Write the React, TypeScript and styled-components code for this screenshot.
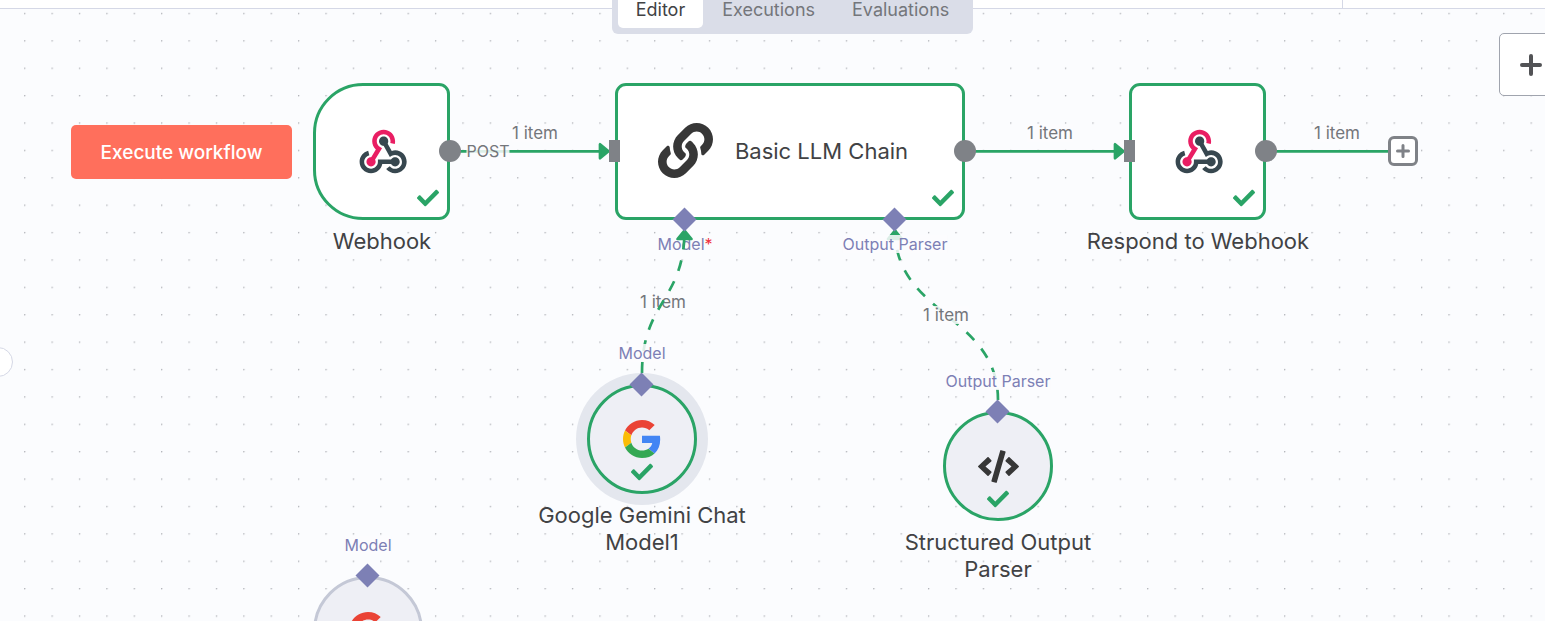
import React from "react";
import styled, { createGlobalStyle, css } from "styled-components";
import { FaCheck, FaCode, FaLink } from "react-icons/fa";

const color = {
  canvas: "#fbfcfe",
  success: "#2aa466",
  text: "#414244",
  icon: "#373737",
  muted: "#74767b",
  handle: "#7f8287",
  violet: "#7d80b5",
  subNode: "#eeeff5",
  line: "#d5d8e6",
};

const GlobalStyle = createGlobalStyle`
  * { box-sizing: border-box; }
  body {
    margin: 0;
    background: ${color.canvas};
    color: ${color.text};
    font-family: Inter, "Liberation Sans", sans-serif;
  }
  button { font-family: inherit; padding: 0; cursor: pointer; }
`;

const Page = styled.div`
  display: flex;
  flex-direction: column;
  min-height: 100vh;
`;

const Header = styled.header`
  position: relative;
  z-index: 2;
  display: flex;
  justify-content: center;
  align-items: flex-end;
  height: 9px;
  padding-left: 40px;
  background: #fff;
  border-bottom: 1px solid ${color.line};
`;

const HeaderDivider = styled.span`
  position: absolute;
  top: 0;
  right: 202px;
  width: 1px;
  height: 8px;
  background: ${color.line};
`;

const Tabs = styled.nav`
  display: flex;
  flex: none;
  gap: 1px;
  height: 48px;
  margin-bottom: -26px;
  padding: 6px;
  border-radius: 6px;
  background: #dadde8;
`;

const Tab = styled.button<{ $active?: boolean }>`
  padding: 0 18px 2px;
  border: 0;
  border-radius: 5px;
  background: ${(p) => (p.$active ? "#fff" : "transparent")};
  color: ${(p) => (p.$active ? color.text : color.muted)};
  font-size: 18px;
  font-weight: 400;
`;

const Canvas = styled.main`
  position: relative;
  flex: 1;
  overflow: hidden;
`;

const Layer = styled.svg`
  position: absolute;
  inset: 0;
  width: 100%;
  height: 100%;
  pointer-events: none;
`;

type At = { $x: number; $y: number };

const at = css<At>`
  position: absolute;
  left: ${(p) => p.$x}px;
  top: ${(p) => p.$y}px;
`;

const ExecuteButton = styled.button<At>`
  ${at}
  width: 221px;
  height: 54px;
  border: 0;
  border-radius: 5px;
  background: #ff6f5c;
  color: #fff;
  font-size: 19px;
  font-weight: 500;
`;

const NodeBox = styled.div<At & { $trigger?: boolean }>`
  ${at}
  display: flex;
  align-items: center;
  justify-content: center;
  width: 137px;
  height: 137px;
  padding-left: 2px;
  border: 3px solid ${color.success};
  border-radius: ${(p) => (p.$trigger ? "50px 11px 11px 50px" : "11px")};
  background: #fff;
  color: ${color.icon};
`;

const WideNodeBox = styled(NodeBox)`
  gap: 22px;
  width: 350px;
  padding: 0 14px 2px 0;
`;

const NodeName = styled.span`
  color: ${color.text};
  font-size: 22px;
  font-weight: 400;
`;

const SubNodeBox = styled.div<At & { $idle?: boolean; $selected?: boolean }>`
  ${at}
  display: flex;
  align-items: center;
  justify-content: center;
  width: 110px;
  height: 110px;
  border: 3px solid ${(p) => (p.$idle ? "#c4c8d6" : color.success)};
  border-radius: 50%;
  background: ${color.subNode};
  color: ${color.icon};
  box-shadow: ${(p) => (p.$selected ? "0 0 0 11px #e4e7ee" : "none")};
`;

const Status = styled.span<{ $round?: boolean }>`
  position: absolute;
  right: ${(p) => (p.$round ? "41px" : "8px")};
  bottom: 8px;
  display: flex;
  color: ${color.success};
`;

const Title = styled.div<At>`
  ${at}
  width: 240px;
  margin-left: -120px;
  font-size: 22px;
  font-weight: 400;
  line-height: 27px;
  text-align: center;
`;

const Label = styled.span<At & { $plain?: boolean }>`
  ${at}
  transform: translate(-50%, -50%);
  color: ${color.muted};
  background: ${(p) => (p.$plain ? "transparent" : "rgba(251, 252, 254, 0.85)")};
  font-size: 16px;
  line-height: 18px;
  white-space: nowrap;
`;

const PortLabel = styled(Label)`
  color: ${color.violet};
`;

const ItemLabel = styled(Label)`
  font-size: 17px;
`;

const Required = styled.span`
  color: #f0303c;
`;

const Output = styled.span<At>`
  ${at}
  width: 22px;
  height: 22px;
  margin: -11px 0 0 -11px;
  border-radius: 50%;
  background: ${color.handle};
`;

const Input = styled.span<At>`
  ${at}
  width: 11px;
  height: 22px;
  margin: -11px 0 0 -6px;
  background: ${color.handle};
`;

const Diamond = styled.span<At>`
  ${at}
  width: 17px;
  height: 17px;
  margin: -8px 0 0 -8px;
  background: ${color.violet};
  transform: rotate(45deg);
`;

const AddNext = styled.button<At>`
  ${at}
  display: flex;
  align-items: center;
  justify-content: center;
  width: 30px;
  height: 30px;
  border: 3px solid ${color.handle};
  border-radius: 6px;
  background: #fff;
  color: ${color.handle};
`;

const AddNode = styled.button`
  position: absolute;
  top: 24px;
  right: -18px;
  display: flex;
  align-items: center;
  justify-content: center;
  width: 64px;
  height: 63px;
  border: 1px solid #a0a4ae;
  border-radius: 5px;
  background: #fff;
  color: #525356;
`;

const SidebarToggle = styled.button`
  position: absolute;
  top: 338px;
  left: -17px;
  display: flex;
  align-items: center;
  justify-content: center;
  width: 30px;
  height: 30px;
  border: 1px solid ${color.line};
  border-radius: 50%;
  background: #fff;
  color: #a0a4ae;
`;

const WebhookIcon = () => (
  <svg width="55" height="55" viewBox="0 0 48 48" aria-hidden="true">
    <g fill="#37474f">
      <path d="M35 37c-2.2 0-4-1.8-4-4s1.8-4 4-4 4 1.8 4 4-1.8 4-4 4" />
      <path d="M35 43c-3 0-5.9-1.4-7.8-3.7l3.1-2.5c1.1 1.4 2.9 2.3 4.7 2.3 3.3 0 6-2.7 6-6s-2.7-6-6-6c-1 0-2 .3-2.9.7l-1.7 1L23.3 16l3.5-1.9 5.3 9.4c1-.3 2-.5 3-.5 5.5 0 10 4.5 10 10S40.5 43 35 43" />
      <path d="M14 43C8.5 43 4 38.5 4 33c0-4.6 3.1-8.5 7.5-9.7l1 3.9C9.9 27.9 8 30.3 8 33c0 3.3 2.7 6 6 6s6-2.7 6-6v-2h15v4H23.8c-.9 4.6-5 8-9.8 8" />
      <path d="M25 19c-2.2 0-4-1.8-4-4s1.8-4 4-4 4 1.8 4 4-1.8 4-4 4" />
    </g>
    <g fill="#e91e63">
      <path d="M14 37c-2.2 0-4-1.8-4-4s1.8-4 4-4 4 1.8 4 4-1.8 4-4 4" />
      <path d="m15.7 34-3.4-2 5.9-9.7c-2-1.9-3.2-4.5-3.2-7.3 0-5.5 4.5-10 10-10s10 4.5 10 10c0 .9-.1 1.7-.3 2.5l-3.9-1c.1-.5.2-1 .2-1.5 0-3.3-2.7-6-6-6s-6 2.7-6 6c0 2.1 1.1 4 2.9 5.1l1.7 1z" />
    </g>
  </svg>
);

const GoogleIcon = () => (
  <svg width="38" height="38" viewBox="0 0 48 48" aria-hidden="true">
    <path fill="#ea4335" d="M24 9.5c3.54 0 6.71 1.22 9.21 3.6l6.85-6.85C35.9 2.38 30.47 0 24 0 14.62 0 6.51 5.38 2.56 13.22l7.98 6.19C12.43 13.72 17.74 9.5 24 9.5z" />
    <path fill="#4285f4" d="M46.98 24.55c0-1.57-.15-3.09-.38-4.55H24v9.02h12.94c-.58 2.96-2.26 5.48-4.78 7.18l7.73 6c4.51-4.18 7.09-10.36 7.09-17.65z" />
    <path fill="#fbbc05" d="M10.53 28.59c-.48-1.45-.76-2.99-.76-4.59s.27-3.14.76-4.59l-7.98-6.19C.92 16.46 0 20.12 0 24c0 3.88.92 7.54 2.56 10.78l7.97-6.19z" />
    <path fill="#34a853" d="M24 48c6.48 0 11.93-2.13 15.89-5.81l-7.73-6c-2.15 1.45-4.92 2.3-8.16 2.3-6.26 0-11.57-4.22-13.47-9.91l-7.98 6.19C6.51 42.62 14.62 48 24 48z" />
  </svg>
);

const PlusIcon = ({ size, weight }: { size: number; weight: number }) => (
  <svg width={size} height={size} viewBox={`0 0 ${size} ${size}`} aria-hidden="true">
    <path
      d={`M${weight / 2} ${size / 2}H${size - weight / 2}M${size / 2} ${weight / 2}V${size - weight / 2}`}
      stroke="currentColor"
      strokeWidth={weight}
      strokeLinecap="round"
    />
  </svg>
);

const Done = ({ round }: { round?: boolean }) => (
  <Status $round={round}>
    <FaCheck size={22} />
  </Status>
);

const Arrow = ({ x, y, up }: { x: number; y: number; up?: boolean }) => (
  <path
    d="M-1.5 0L-10 -7V7Z"
    transform={`translate(${x} ${y})${up ? " rotate(-90)" : ""}`}
    fill={color.success}
    stroke={color.success}
    strokeWidth="2.7"
    strokeLinejoin="round"
  />
);

const edge = { fill: "none", stroke: color.success, strokeWidth: 2.7 };

export default function App() {
  return (
    <Page>
      <GlobalStyle />
      <Header>
        <Tabs>
          <Tab $active>Editor</Tab>
          <Tab>Executions</Tab>
          <Tab>Evaluations</Tab>
        </Tabs>
        <HeaderDivider />
      </Header>

      <Canvas>
        <Layer aria-hidden="true">
          <defs>
            <pattern id="dots" x="24.1" y="3.8" width="27.39" height="27.39" patternUnits="userSpaceOnUse">
              <circle cx="0.7" cy="0.7" r="0.7" fill="#a0a2a9" />
            </pattern>
          </defs>
          <rect width="100%" height="100%" fill="url(#dots)" />
          <path {...edge} d="M450 142.3H604M965 142.3H1120M1266 142.3H1388" />
          <path {...edge} strokeDasharray="11 11" d="M998 391C998 306 895 306 895 221" />
          <Arrow x={610} y={142.3} />
          <Arrow x={1125} y={142.3} />
          <Arrow x={895} y={220} up />
        </Layer>

        <ItemLabel $x={535} $y={124}>1 item</ItemLabel>
        <ItemLabel $x={1050} $y={124}>1 item</ItemLabel>
        <ItemLabel $x={1337} $y={124}>1 item</ItemLabel>
        <ItemLabel $x={946} $y={306}>1 item</ItemLabel>
        <ItemLabel $x={663} $y={293} $plain>1 item</ItemLabel>
        <Label $x={488} $y={142}>POST</Label>
        <PortLabel $x={685} $y={235} $plain>
          Model<Required>*</Required>
        </PortLabel>
        <PortLabel $x={895} $y={235}>Output Parser</PortLabel>

        <Layer aria-hidden="true">
          <path {...edge} strokeDasharray="11 11" d="M642 364C642 292 684.5 292 684.5 221" />
          <Arrow x={684.5} y={220} up />
        </Layer>

        <PortLabel $x={642} $y={344}>Model</PortLabel>
        <PortLabel $x={998} $y={372}>Output Parser</PortLabel>
        <PortLabel $x={368} $y={536}>Model</PortLabel>

        <ExecuteButton $x={71} $y={116}>Execute workflow</ExecuteButton>

        <NodeBox $x={313} $y={74} $trigger>
          <WebhookIcon />
          <Done />
        </NodeBox>
        <Title $x={382} $y={219}>Webhook</Title>
        <Output $x={450} $y={142} />

        <WideNodeBox $x={615} $y={74}>
          <FaLink size={55} />
          <NodeName>Basic LLM Chain</NodeName>
          <Done />
        </WideNodeBox>
        <Input $x={615} $y={142} />
        <Output $x={965} $y={142} />
        <Diamond $x={684} $y={210} />
        <Diamond $x={894} $y={210} />

        <NodeBox $x={1129} $y={74}>
          <WebhookIcon />
          <Done />
        </NodeBox>
        <Title $x={1198} $y={219}>Respond to Webhook</Title>
        <Input $x={1130} $y={142} />
        <Output $x={1266} $y={142} />
        <AddNext $x={1388} $y={127} aria-label="Add next node">
          <PlusIcon size={14} weight={3} />
        </AddNext>

        <SubNodeBox $x={587} $y={375} $selected>
          <GoogleIcon />
          <Done round />
        </SubNodeBox>
        <Diamond $x={641} $y={375} />
        <Title $x={642} $y={493}>Google Gemini Chat Model1</Title>

        <SubNodeBox $x={943} $y={402}>
          <FaCode size={41} />
          <Done round />
        </SubNodeBox>
        <Diamond $x={997} $y={402} />
        <Title $x={998} $y={520}>Structured Output Parser</Title>

        <SubNodeBox $x={313} $y={567} $idle>
          <GoogleIcon />
        </SubNodeBox>
        <Diamond $x={367} $y={566} />

        <AddNode aria-label="Add node">
          <PlusIcon size={22} weight={4} />
        </AddNode>
        <SidebarToggle aria-label="Expand sidebar">
          <svg width="6" height="10" viewBox="0 0 6 10" fill="none" stroke="currentColor" aria-hidden="true">
            <path d="M5 1L1 5L5 9" />
          </svg>
        </SidebarToggle>
      </Canvas>
    </Page>
  );
}
